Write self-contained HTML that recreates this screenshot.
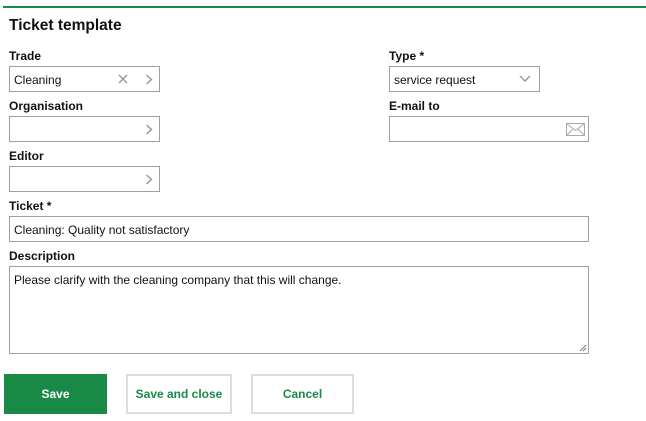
<!DOCTYPE html>
<html><head><style>
body{margin:0;width:646px;height:421px;background:#fff;font-family:"Liberation Sans",sans-serif;position:relative;overflow:hidden;color:#111}
.a{position:absolute}
.line{left:3px;top:6px;width:643px;height:2px;background:#1a8a47}
h1{position:absolute;left:9px;top:17px;margin:0;font-size:15.5px;font-weight:bold}
.l{position:absolute;font-size:12px;font-weight:bold}
.i{position:absolute;box-sizing:border-box;border:1px solid #a0a0a0;height:26px;font-size:12px;line-height:26px;padding-left:4px;background:#fff}
.chev{position:absolute;right:6px;top:7px}
.b{position:absolute;top:374px;height:40px;box-sizing:border-box;font-size:12px;font-weight:bold;text-align:center;line-height:41px}
.bb{border:2px solid #dcdcdc;line-height:37px}
</style></head><body>
<div class="a line"></div>
<h1>Ticket template</h1>
<div class="l" style="left:9px;top:49px">Trade</div>
<div class="i" style="left:9px;top:66px;width:151px">Cleaning
<svg class="a" style="left:108px;top:7px" width="10" height="10"><path d="M1 1L9 9M9 1L1 9" stroke="#999" stroke-width="1.5"/></svg>
<svg class="chev" width="8" height="11"><path d="M1.5 1L6.5 5.5L1.5 10" stroke="#999" stroke-width="1.5" fill="none"/></svg></div>
<div class="l" style="left:9px;top:99px">Organisation</div>
<div class="i" style="left:9px;top:116px;width:151px"><svg class="chev" width="8" height="11"><path d="M1.5 1L6.5 5.5L1.5 10" stroke="#999" stroke-width="1.5" fill="none"/></svg></div>
<div class="l" style="left:9px;top:149px">Editor</div>
<div class="i" style="left:9px;top:166px;width:151px"><svg class="chev" width="8" height="11"><path d="M1.5 1L6.5 5.5L1.5 10" stroke="#999" stroke-width="1.5" fill="none"/></svg></div>
<div class="l" style="left:389px;top:49px">Type *</div>
<div class="i" style="left:389px;top:66px;width:151px">service request
<svg class="a" style="right:8px;top:8px" width="12" height="8"><path d="M1 1L6 6L11 1" stroke="#999" stroke-width="1.5" fill="none"/></svg></div>
<div class="l" style="left:389px;top:99px">E-mail to</div>
<div class="i" style="left:389px;top:116px;width:200px"><svg class="a" style="right:3px;top:6px" width="19" height="13"><rect x="0.5" y="0.5" width="18" height="12" fill="none" stroke="#aaa"/><path d="M0.5 0.5L9.5 7.5L18.5 0.5M0.5 12.5L7 6M18.5 12.5L12 6" stroke="#aaa" fill="none"/></svg></div>
<div class="l" style="left:9px;top:199px">Ticket *</div>
<div class="i" style="left:9px;top:216px;width:580px">Cleaning: Quality not satisfactory</div>
<div class="l" style="left:9px;top:249px">Description</div>
<div class="i" style="left:9px;top:266px;width:580px;height:88px;line-height:16px;padding-top:5px">Please clarify with the cleaning company that this will change.
<svg class="a" style="right:1px;bottom:1px" width="8" height="8"><path d="M7 1L1 7M7 4L4 7" stroke="#777"/></svg></div>
<div class="b" style="left:4px;width:103px;background:#188a46;color:#fff">Save</div>
<div class="b bb" style="left:126px;width:106px;color:#188a46">Save and close</div>
<div class="b bb" style="left:251px;width:103px;color:#188a46">Cancel</div>
</body></html>
